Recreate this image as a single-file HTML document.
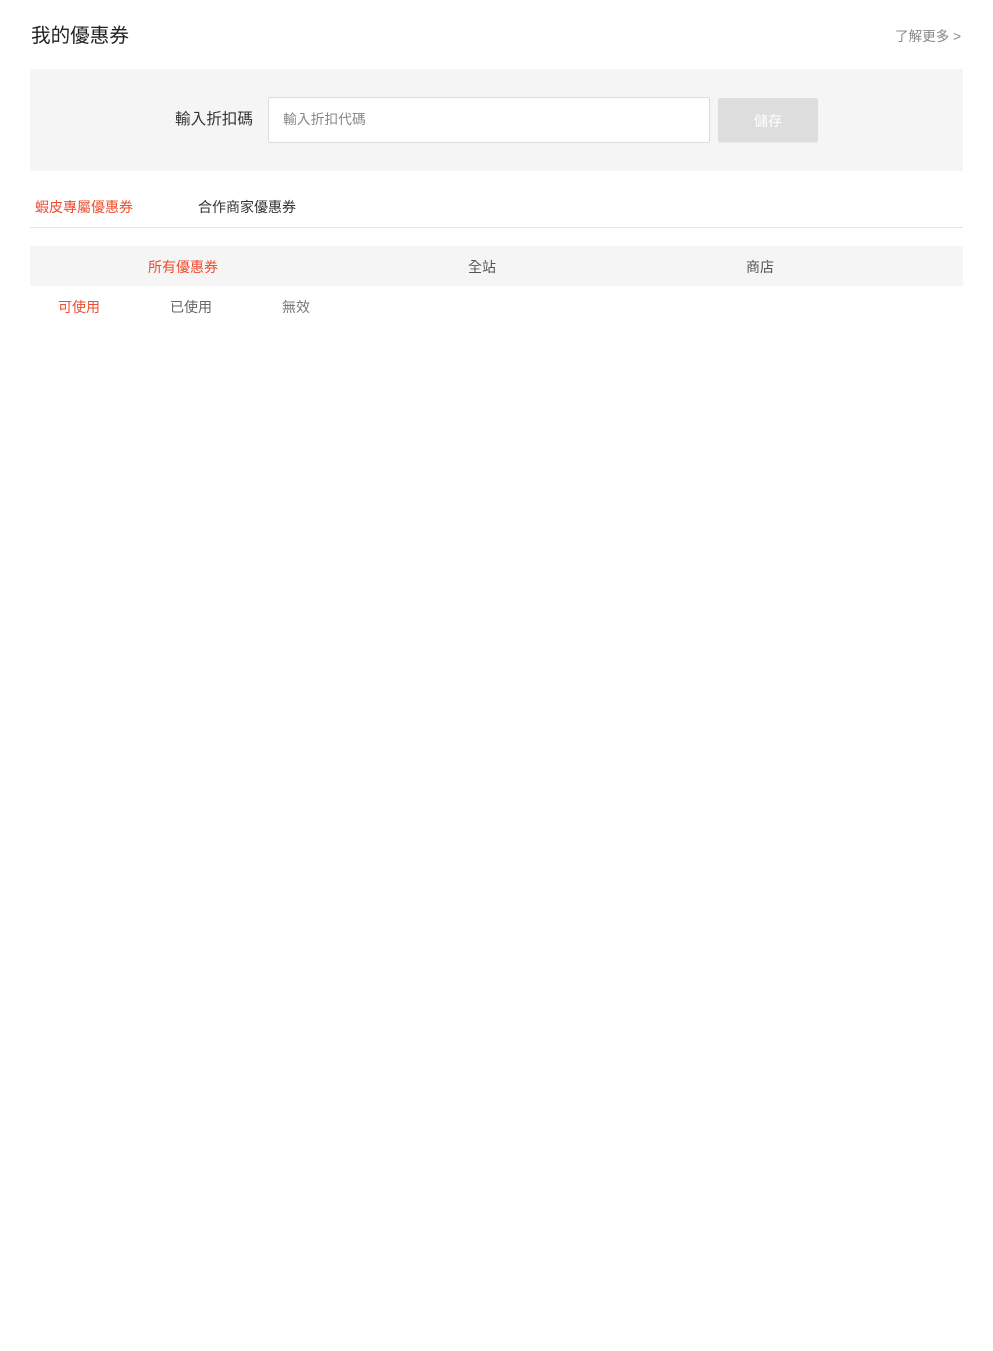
<!DOCTYPE html>
<html><head><meta charset="utf-8"><style>
*{margin:0;padding:0;box-sizing:border-box}
body{width:993px;height:1351px;background:#fff;font-family:"Liberation Sans","Noto Sans CJK TC",sans-serif;color:#333;position:relative}
.a{position:absolute;white-space:nowrap;line-height:1}
</style></head><body>
<div class="a" style="left:31px;top:27px;font-size:19.6px;color:#222">我的優惠券</div>
<div class="a" style="left:895px;top:30px;font-size:13.6px;color:#888">了解更多 &gt;</div>
<div class="a" style="left:30px;top:69px;width:933px;height:102px;background:#f5f5f5"></div>
<div class="a" style="left:175px;top:112px;font-size:15.6px;color:#333">輸入折扣碼</div>
<div class="a" style="left:268px;top:97px;width:442px;height:46px;background:#fff;border:1px solid #ddd;border-radius:2px"></div>
<div class="a" style="left:283px;top:113px;font-size:13.8px;color:#888">輸入折扣代碼</div>
<div class="a" style="left:718px;top:98px;width:100px;height:44px;background:#ddd;border-radius:2px;box-shadow:0 1px 1px rgba(0,0,0,.06);color:#fff;font-size:14px;text-align:center;line-height:46px">儲存</div>
<div class="a" style="left:35px;top:200px;font-size:14px;color:#ee4d2d">蝦皮專屬優惠券</div>
<div class="a" style="left:198px;top:200px;font-size:14px;color:#333">合作商家優惠券</div>
<div class="a" style="left:30px;top:227px;width:933px;height:1px;background:#e5e5e5"></div>
<div class="a" style="left:30px;top:246px;width:933px;height:40px;background:#f5f5f5"></div>
<div class="a" style="left:148px;top:260px;font-size:14px;color:#ee4d2d">所有優惠券</div>
<div class="a" style="left:468px;top:260px;font-size:14px;color:#555">全站</div>
<div class="a" style="left:746px;top:260px;font-size:14px;color:#555">商店</div>
<div class="a" style="left:58px;top:300px;font-size:14px;color:#ee4d2d">可使用</div>
<div class="a" style="left:170px;top:300px;font-size:14px;color:#666">已使用</div>
<div class="a" style="left:282px;top:300px;font-size:14px;color:#777">無效</div>
</body></html>
